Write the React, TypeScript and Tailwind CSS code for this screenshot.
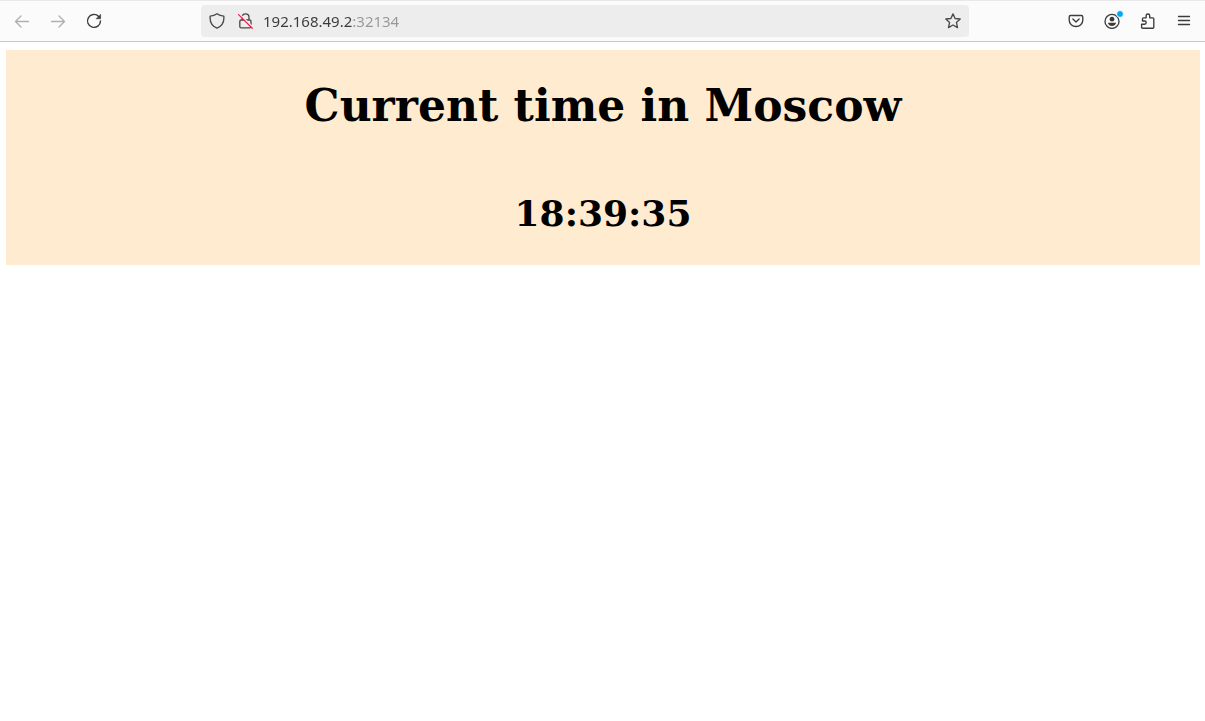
import type { ReactNode } from "react";

function Icon({ children, size = 16 }: { children: ReactNode; size?: number }) {
  return (
    <svg
      width={size}
      height={size}
      viewBox="0 0 16 16"
      fill="none"
      stroke="currentColor"
      strokeWidth="1.35"
      strokeLinecap="round"
      strokeLinejoin="round"
      aria-hidden="true"
    >
      {children}
    </svg>
  );
}

function ToolButton({ label, children, disabled }: { label: string; children: ReactNode; disabled?: boolean }) {
  return (
    <button
      type="button"
      aria-label={label}
      disabled={disabled}
      className="flex h-8 w-9 items-center justify-center text-[#3c3c3c] disabled:text-[#b0b0b0]"
    >
      {children}
    </button>
  );
}

function Toolbar() {
  return (
    <header className="flex items-center border-t border-b border-t-[#e8e8e8] border-b-[#c8c8c8] bg-[#fbfbfb] py-1 pr-[3px] pl-1">
      <nav className="flex" aria-label="History">
        <ToolButton label="Back" disabled>
          <Icon>
            <path d="M1.5 8.5H14.5M7 3 1.5 8.5 7 14" />
          </Icon>
        </ToolButton>
        <ToolButton label="Forward" disabled>
          <Icon>
            <path d="M1.5 8.5H14.5M9 3 14.5 8.5 9 14" />
          </Icon>
        </ToolButton>
        <ToolButton label="Reload">
          <Icon>
            <path d="M12.7 3.4A6.5 6.5 0 1 0 14.5 8" strokeWidth="1.4" />
            <path d="M14.6 1.6V5.8H10.4Z" fill="currentColor" strokeWidth="0.6" />
          </Icon>
        </ToolButton>
      </nav>

      <div className="mx-auto flex h-8 max-w-[768px] flex-1 items-center rounded bg-[#ededed] px-2 text-[#4a4a4a]">
        <button type="button" aria-label="Tracking protection">
          <Icon>
            <path d="M8 .8C6 2.3 3.5 3 1.2 3.1 .6 8.6 3.2 13.1 8 15.2 12.8 13.1 15.4 8.6 14.8 3.1 12.5 3 10 2.3 8 .8Z" />
          </Icon>
        </button>
        <button type="button" aria-label="Connection not secure" className="ml-3">
          <Icon>
            <path d="M5.2 7V4.2a3.4 3.4 0 0 1 6.8 0V7M4.2 7H12.6a1.4 1.4 0 0 1 1.4 1.4v5a1.4 1.4 0 0 1-1.4 1.4H4.2a1.4 1.4 0 0 1-1.4-1.4v-5A1.4 1.4 0 0 1 4.2 7Z" />
            <path d="M2.6 .9 15.6 13.9" stroke="#ededed" strokeWidth="1.4" />
            <path d="M1.6 1.6 15.2 15.2" stroke="#f0214f" strokeWidth="1.3" />
          </Icon>
        </button>
        <input
          type="text"
          aria-label="Address"
          defaultValue="192.168.49.2:32134"
          className="ml-2.5 h-8 min-w-0 flex-1 bg-[linear-gradient(90deg,#3a3a3a_89px,#979797_89px)] bg-clip-text font-['Noto_Sans',sans-serif] text-[15px] leading-5 text-transparent outline-none"
        />
        <button type="button" aria-label="Bookmark this page">
          <Icon>
            <path d="M8 .9 10.1 5.5 15.2 6 11.4 9.4 12.5 14.6 8 12 3.5 14.6 4.6 9.4 .8 6 5.9 5.5Z" />
          </Icon>
        </button>
      </div>

      <div className="flex">
        <ToolButton label="Save to Pocket">
          <Icon>
            <path d="M2.7 2.5H13.3a1.5 1.5 0 0 1 1.5 1.5V7.2a6.8 6.3 0 0 1-13.6 0V4a1.5 1.5 0 0 1 1.5-1.5Z" />
            <path d="M4.9 6 8 8.9 11.1 6" strokeWidth="1.4" />
          </Icon>
        </ToolButton>
        <ToolButton label="Account">
          <span className="relative">
            <Icon>
              <circle cx="8" cy="8.4" r="7" />
              <circle cx="8" cy="6.2" r="2.4" fill="currentColor" stroke="none" />
              <path d="M4 9.8H12C12 11.8 10.3 12.9 8 12.9S4 11.8 4 9.8Z" fill="currentColor" stroke="none" />
            </Icon>
            <span className="absolute -top-[3px] -right-1 size-2 rounded-full border border-[#fbfbfb] bg-[#00aaf4]" />
          </span>
        </ToolButton>
        <ToolButton label="Extensions">
          <Icon>
            <path d="M2.3 15.2H12.8a1 1 0 0 0 1-1V5.8a1 1 0 0 0-1-1H9.7V2.8a1.8 1.8 0 0 0-3.6 0V4.8H3.5a1 1 0 0 0-1 1V8H4.6a1.6 1.6 0 0 1 0 3.2H1.6v3a1 1 0 0 0 .7 1Z" />
          </Icon>
        </ToolButton>
        <ToolButton label="Open application menu">
          <Icon>
            <path d="M2.5 3.5H13.5M2.5 7.5H13.5M2.5 11.5H13.5" />
          </Icon>
        </ToolButton>
      </div>
    </header>
  );
}

export default function App() {
  return (
    <div className="min-h-screen bg-white">
      <Toolbar />
      <main className="mt-2 mr-[5px] ml-1.5 bg-[#ffebcf] py-7 text-center font-['DejaVu_Serif',serif] font-bold text-black">
        <h1 className="text-[44px] leading-[56px]">Current time in Moscow</h1>
        <h2 className="mt-[55px] text-[36px] leading-[48px]">18:39:35</h2>
      </main>
    </div>
  );
}
